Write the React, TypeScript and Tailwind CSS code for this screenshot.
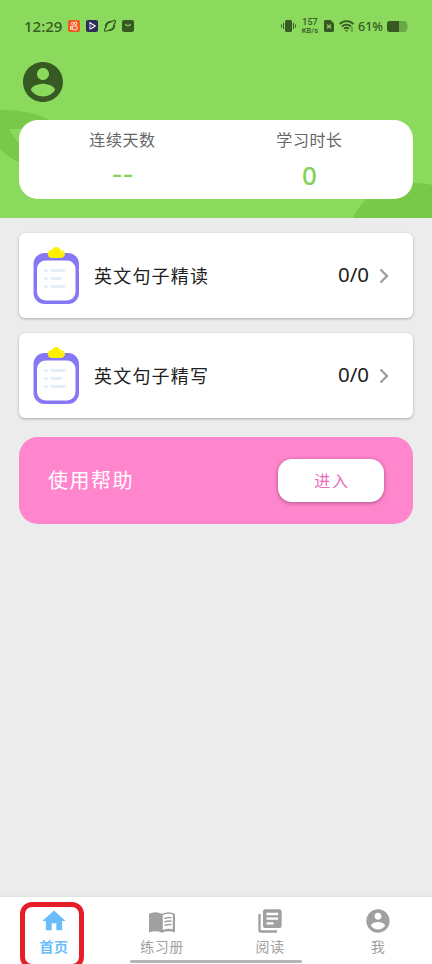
import type { ReactNode } from "react";
import { MdHome, MdLibraryBooks } from "react-icons/md";

interface StatProps {
  label: string;
  value: string;
}

interface Task {
  title: string;
  progress: string;
}

interface Tab {
  label: string;
  icon: ReactNode;
  active?: boolean;
}

const AccountIcon = ({ className }: { className?: string }) => (
  <svg viewBox="0 0 24 24" fill="currentColor" className={className}>
    <path d="M12 2C6.48 2 2 6.48 2 12s4.48 10 10 10 10-4.48 10-10S17.52 2 12 2zm0 3c1.66 0 3 1.34 3 3s-1.34 3-3 3-3-1.34-3-3 1.34-3 3-3zm0 14.2c-2.5 0-4.71-1.28-6-3.22.03-1.99 4-3.08 6-3.08 1.99 0 5.97 1.09 6 3.08-1.29 1.94-3.5 3.22-6 3.22z" />
  </svg>
);

const BookIcon = ({ className }: { className?: string }) => (
  <svg viewBox="0 0 28 28" fill="none" className={className}>
    <path
      d="M1 6.800q6.500-3 13 0 6.500-3 13 0V25.500q-6.500-2.600-13 .2-6.500-2.800-13-.2z"
      fill="currentColor"
    />
    <path d="M14.800 8.200q5-2.300 10-.8v14.800q-5-1.200-10 .8z" fill="#fff" />
    <path
      d="M16.500 11.500q3.500-1.500 7-.8M16.500 15q3.500-1.500 7-.8M16.500 18.500q3.500-1.500 7-.8"
      stroke="currentColor"
      strokeWidth="1.600"
    />
  </svg>
);

const tasks: Task[] = [
  { title: "英文句子精读", progress: "0/0" },
  { title: "英文句子精写", progress: "0/0" },
];

const tabs: Tab[] = [
  { label: "首页", icon: <MdHome className="size-7" />, active: true },
  { label: "练习册", icon: <BookIcon className="size-7" /> },
  { label: "阅读", icon: <MdLibraryBooks className="size-7" /> },
  { label: "我", icon: <AccountIcon className="size-7" /> },
];

const StatusBar = () => (
  <div className="flex h-[52px] items-center justify-between pr-6 pl-6 font-['Noto_Sans',sans-serif] font-medium text-[#375a22]">
    <div className="flex items-center">
      <span className="w-11 text-[15px] leading-none whitespace-nowrap">
        12:29
      </span>
      {/* Video app */}
      <svg viewBox="0 0 12 12" fill="none" className="size-3">
        <rect width="12" height="12" rx="2" fill="#f2571b" />
        <g stroke="#fff" strokeWidth="0.9">
          <circle cx="4.4" cy="3.5" r="1.1" />
          <circle cx="7.6" cy="3.2" r="1.3" />
          <rect x="4.4" y="6" width="4.6" height="3.8" rx="0.8" />
          <path d="M4.2 7L2.5 6.3v3.1l1.7-.7" />
        </g>
      </svg>
      {/* Player */}
      <svg viewBox="0 0 12 12" fill="none" className="ml-1.5 size-3">
        <rect width="12" height="12" rx="2" fill="#2c2c55" />
        <path d="M4 9.5V6.5M4 4.5V2.7L9.3 6 5 8.7" stroke="#fff" strokeWidth="1.1" />
        <path d="M3 5.5l3 .5" stroke="#a9a4e8" strokeWidth="0.8" />
      </svg>
      {/* Planet */}
      <svg viewBox="0 0 12 12" fill="none" className="ml-1.5 size-3">
        <path
          d="M2 7.2C1.4 4 4.1 1.6 7.2 1.7M10 4.4c.8 3.2-1.9 6-5.2 5.9"
          stroke="currentColor"
          strokeWidth="2"
        />
        <path
          d="M2 7.2C.1 9.2-.1 10.9.9 11.2c1.1.3 2.6-.4 3.9-.9M7.2 1.7C9 .7 11 .1 11.5 1c.4.8-.4 2-1.5 3.4"
          stroke="currentColor"
          strokeWidth="1.2"
        />
      </svg>
      {/* Shop */}
      <svg viewBox="0 0 12 12" fill="none" className="ml-1.5 size-3">
        <rect width="12" height="12" rx="2.2" fill="currentColor" />
        <path d="M3.3 4c.8 2.3 4.6 2.3 5.4 0" stroke="#8bd95d" strokeWidth="1.2" />
      </svg>
    </div>

    <div className="flex items-center">
      {/* Vibrate */}
      <svg viewBox="0 0 16 12" fill="none" className="h-3 w-4">
        <rect x="4" width="7" height="12" rx="1.6" fill="currentColor" />
        <path
          d="M2.5 3v6M.5 4.5v3M12.5 3v6M14.5 4.5v3"
          stroke="currentColor"
          strokeWidth="1"
        />
      </svg>
      <div className="ml-[3px] flex w-5 flex-col items-center font-[Roboto]">
        <span className="text-[9px] leading-[9px]">157</span>
        <span className="text-[7.500px] leading-[8px] whitespace-nowrap">KB/s</span>
      </div>
      {/* SIM */}
      <svg viewBox="0 0 10 12" fill="none" className="ml-1 h-3 w-2.5">
        <path
          d="M1.6 0h5L10 3.4v7A1.6 1.6 0 018.4 12H1.6A1.6 1.6 0 010 10.4V1.6A1.6 1.6 0 011.6 0z"
          fill="currentColor"
        />
        <path d="M3 4.8l4 3.4M7 4.8L3 8.2" stroke="#8bd95d" strokeWidth="1.2" />
      </svg>
      {/* Wi-Fi */}
      <svg viewBox="0 0 16 12" fill="none" className="ml-[5px] h-3 w-4">
        <g stroke="currentColor" strokeWidth="1.700">
          <path d="M.6 4.2c3.9-4 10-4 13.900 0" />
          <path d="M2.9 6.6c2.7-2.700 6.600-2.700 9.300 0" />
          <path d="M5 8.9c1.500-1.400 3.500-1.400 5 0" />
        </g>
        <path d="M6 10.2h3L7.5 12z" fill="currentColor" />
        <path d="M11.7 8.8L13 7.2l1.2 1.6zM11.7 10l1.300 1.600 1.200-1.600z" fill="currentColor" />
      </svg>
      <span className="ml-[3px] w-[29px] pt-0.5 text-[12.500px] leading-none whitespace-nowrap">
        61%
      </span>
      {/* Battery */}
      <svg viewBox="0 0 21 11" className="h-[11px] w-[21px]">
        <rect width="20" height="11" rx="3" fill="#69a747" />
        <path d="M3 0h9v11H3a3 3 0 01-3-3V3a3 3 0 013-3z" fill="currentColor" />
        <path d="M20 3.5q1.500 2 0 4z" fill="#69a747" />
      </svg>
    </div>
  </div>
);

const Stat = ({ label, value }: StatProps) => (
  <div className="flex w-[187px] flex-col items-center">
    <span className="mt-[7px] text-[16px] leading-6 tracking-[0.6px] text-[#666]">
      {label}
    </span>
    <span
      className={`mt-1.5 text-[#85d05b] ${
        value === "--"
          ? "font-['Inter',sans-serif] text-[24px] leading-9 font-medium"
          : "font-['Noto_Sans',sans-serif] text-[26px] leading-9 font-medium"
      }`}
    >
      {value}
    </span>
  </div>
);

const Clipboard = () => (
  <svg viewBox="0 0 46 57" fill="none" className="h-[57px] w-[46px] shrink-0">
    <rect x="0.5" y="6" width="45.5" height="51" rx="11" fill="#8677f5" />
    <rect x="4" y="13.5" width="38.5" height="40" rx="8.5" fill="#fff" />
    <path
      d="M19 11c-3 0-4.3-1.8-4.3-4s1.6-4 4.3-4c.8-1.8 2.2-3 4.200-3s3.400 1.200 4.200 3c2.900 0 4.600 1.800 4.600 4s-1.500 4-4.500 4z"
      fill="#fff000"
    />
    <path d="M27.5 4.5q2 .2 2.5 2.2" stroke="#fffbc0" strokeWidth="0.8" />
    <g fill="#e2eef8">
      <rect x="11" y="22" width="4" height="3" rx="1.5" />
      <rect x="17.5" y="22" width="15" height="3" rx="1.5" />
      <rect x="11" y="30" width="4" height="3" rx="1.5" />
      <rect x="17.5" y="30" width="11.5" height="3" rx="1.5" />
      <rect x="11" y="38" width="4" height="3" rx="1.5" />
      <rect x="17.5" y="38" width="15" height="3" rx="1.5" />
    </g>
  </svg>
);

const TaskCard = ({ title, progress }: Task) => (
  <div className="flex h-[85px] items-center rounded-md bg-white pr-6 pl-3.5 shadow-[0_1px_3px_rgba(0,0,0,0.28)]">
    <Clipboard />
    <span className="ml-[15px] flex-1 pb-px text-[18px] tracking-[1.2px] text-[#212121]">
      {title}
    </span>
    <span className="pb-0.5 font-['Noto_Sans',sans-serif] text-[20.500px] text-[#212121]">
      {progress}
    </span>
    <svg viewBox="0 0 10 16" fill="none" className="ml-2.5 h-4 w-2.5">
      <path d="M1.5 1.5L8 8l-6.500 6.500" stroke="#9e9e9e" strokeWidth="2.4" />
    </svg>
  </div>
);

const App = () => {
  return (
    <div className="relative flex h-[964px] w-[432px] flex-col overflow-hidden bg-[#ececec] font-['Noto_Sans_CJK_SC',sans-serif]">
      {/* Header */}
      <header className="relative h-[218px] shrink-0 overflow-hidden bg-[#8bd95d]">
        {/* Leaves */}
        <svg viewBox="0 0 432 218" className="absolute inset-0 size-full">
          <path d="M0 110q30-1 52 11L40 168Q12 163 0 149z" fill="#78c94a" />
          <path d="M9 129h16v19q-9-6-16-19z" fill="#8bd95d" />
          <path d="M353 218c10-23 35-36 64-35 6 0 11 1 15 2v33z" fill="#78c94a" />
        </svg>
        <div className="relative">
          <StatusBar />
          <AccountIcon className="mt-[5.5px] ml-[19px] size-12 text-[#375a22]" />
          <div className="mx-[19px] mt-[14.5px] flex h-[79px] justify-center rounded-[19px] bg-white">
            <Stat label="连续天数" value="--" />
            <Stat label="学习时长" value="0" />
          </div>
        </div>
      </header>

      {/* Content */}
      <main className="flex-1 px-[19px] pt-[15px]">
        <div className="flex flex-col gap-[15px]">
          {tasks.map((task) => (
            <TaskCard key={task.title} {...task} />
          ))}
        </div>
        <div className="mt-[19px] flex h-[87px] items-center justify-between rounded-[19px] bg-[#ff85cd] px-[29px]">
          <span className="pb-0.5 text-[20px] tracking-[1.5px] text-white">使用帮助</span>
          <button className="h-[43px] w-[106px] rounded-[14px] bg-white pb-0.5 pl-0.5 text-[16px] tracking-[1.8px] text-[#e96dba] shadow-[0_1px_4px_rgba(0,0,0,0.35)]">
            进入
          </button>
        </div>
      </main>

      {/* Bottom tabs */}
      <nav className="relative flex h-[67px] shrink-0 bg-white shadow-[0_-1px_2px_rgba(0,0,0,0.06)]">
        {tabs.map((tab) => (
          <div
            key={tab.label}
            className={`flex flex-1 flex-col items-center pt-[9.5px] ${
              tab.active ? "font-bold text-[#69bdfb]" : "text-[#a0a0a0]"
            }`}
          >
            {tab.icon}
            <span className="mt-px text-[14px] leading-5 tracking-[0.5px]">
              {tab.label}
            </span>
          </div>
        ))}
        {/* Gesture handle */}
        <div className="absolute bottom-[1.5px] left-[130px] h-[3px] w-[172px] rounded-full bg-[#b5b5b5]" />
        {/* Highlight on the current tab */}
        <div className="absolute top-[5px] left-5 h-[67px] w-16 rounded-[12px] border-5 border-[#e61e27]" />
      </nav>
    </div>
  );
};

export default App;
